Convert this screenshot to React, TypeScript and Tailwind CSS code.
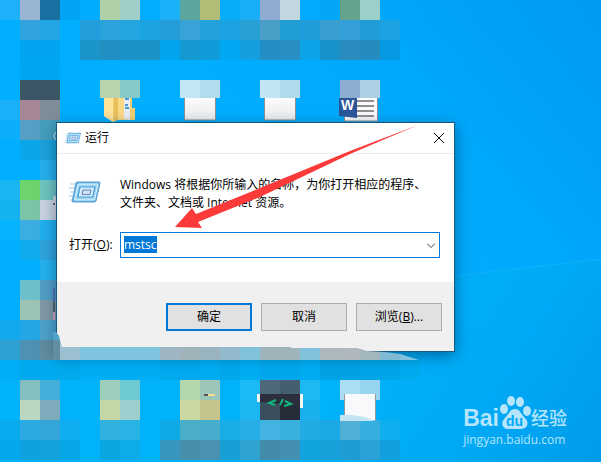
import { useEffect, useRef, useState } from 'react';

const TILE = 20;

// One entry per row of wallpaper tiles: [first column, colours]
const tileRows: { y: number; h?: number; runs: [number, string][] }[] = [
  { y: 0, runs: [[0, '1fb0fa 9ab4d4 1b6fa3 02a5f5 00acff b1cfa8 a0cec9 00adff 1bb0f8 5aa69e b1bc76 07adf8 19aef6 8eaccf c2d6df 00abff 03a7f5 64a48c 9bcfca']] },
  { y: 20, runs: [[1, '30a3dc 22a7e4'], [4, '239ddc 2ba2d9 22a5e0 1ca4e2 259ddb 38a3d6 239fd9 1aa2e2 289fd5 4a9fc9 219dd6 229ddb 399ed0 339ed7 219cd7 1ba2e3']] },
  { y: 40, runs: [[1, '01a4ef 01a4ef'], [4, '1c95cb 2090c3 1c93c8 1c92c6 03a4ee 1499d3 109bda 00a8f4 149fe0 238fc4 278fc2 0ca3e8 1992c9 2a8cbf 248cbf 0899e3']] },
  { y: 60, runs: [[1, '00a6f2 00a6f2']] },
  { y: 80, runs: [[1, '3b5664 3b5664']] },
  { y: 80, h: 18, runs: [[5, 'b8d4af 87cbc8'], [9, 'c3e6f5 b1dbee'], [13, 'c2e5f4 b0daed'], [17, '8caed3 add0e4']] },
  { y: 100, runs: [[0, '1ab0f9 a78797 7f8d99']] },
  { y: 120, runs: [[0, '0aaefb 559fc5 479fbd']] },
  { y: 140, runs: [[1, '0ba6e9 1ba3dc']] },
  { y: 160, runs: [[2, '27b0ec']] },
  { y: 180, runs: [[0, '19b5f2 6ed26d 70c6bf']] },
  { y: 200, runs: [[0, '12b3ef 7bc4a6 c9d4df']] },
  { y: 220, runs: [[0, '06b3ff 3bade1 21b0ee']] },
  { y: 240, runs: [[1, '10abed 30a4dc']] },
  { y: 260, runs: [[2, '25b2ee']] },
  { y: 280, runs: [[1, '6cbfcb 529fc7']] },
  { y: 300, runs: [[1, '9cc4b5 839ba7']] },
  { y: 320, runs: [[0, '13a8eb 22a6e5 4fa3cb']] },
  { y: 340, runs: [[0, '2ca0d1 4e92b3 608d9f']] },
  { y: 360, runs: [[0, '00adf7 00aaee 00aaee 00a9ed 00aef5 00aef5 00aef5 00aef5 00a9ee 00a9ee 00adf2 00a9ec 00aef4 00a9ec 00a9ec 00adf2 00a3e4 00a3e4 00a6e8 00a6e8 00abf0']] },
  { y: 380, runs: [[1, '83bfbe 43aed9'], [5, '9bcfbc 6fc9d3'], [9, 'b5d7ad 9bc6b8'], [12, '1bb9f5 4f6879 455e70 1cb9f4'], [17, 'acdef3 96d4ef']] },
  { y: 400, runs: [[1, 'bad7c2 7eabbc'], [5, 'c3d6a6 9dcfce'], [9, 'cad7a0 c3c58c'], [12, '1cb6f3 3b4e5d 252d38 1ab0ee']] },
  { y: 420, runs: [[0, '08aaee 2aaae0 34a5d8 10aef0'], [5, '30b1de 28b3e4'], [8, '10a9e8 4baec8 46adcc 18ade7 25afe5 43b3e2 3ab0df 1fabe3 1aa9e5 4fb0d7 36aee0 0dafef']] },
  { y: 440, runs: [[0, '04a9ed 0ea2de 12a3dd 07a7e8'], [5, '0aa6e1 0dabe8'], [8, '3996bf 458faa 4a92b1 18a0d6 30a3d1 438ca9 4490b1 11a4de 17a1db 1e9dd3 2aa2d8 11a0dd']] },
];

const edgeTiles = '9cc0d0 80c3df 80c3df 80c3df 80c3df 9db6c1 a0b3ba 9ab4bf 91bacc 80c1dc 9fb3bb 9fb3bb 80c1dc acb8be afb8bc a2b6be 80b9d4 80c1dc';

const Tiles = ({ y, h = TILE, col, colors }: { y: number; h?: number; col: number; colors: string }) => (
  <>
    {colors.split(' ').map((color, i) => (
      <rect key={i} x={(col + i) * TILE} y={y} width={TILE} height={h} fill={`#${color}`} />
    ))}
  </>
);

const Wallpaper = () => (
  <svg className="absolute inset-0 h-full w-full" shapeRendering="crispEdges" aria-hidden="true">
    <defs>
      <linearGradient id="sky" gradientUnits="userSpaceOnUse" x1="330" y1="260" x2="620" y2="20">
        <stop offset="0" stopColor="#00aeff" />
        <stop offset="0.5" stopColor="#00a8fb" />
        <stop offset="1" stopColor="#0099f3" />
      </linearGradient>
      <linearGradient id="floor" gradientUnits="userSpaceOnUse" x1="400" y1="300" x2="620" y2="440">
        <stop offset="0" stopColor="#00b2fa" />
        <stop offset="0.5" stopColor="#00a9f5" />
        <stop offset="1" stopColor="#009bea" />
      </linearGradient>
      <linearGradient id="paper" x1="0" y1="0" x2="0" y2="1">
        <stop offset="0" stopColor="#fbfbfc" />
        <stop offset="1" stopColor="#ececee" />
      </linearGradient>
    </defs>
    <rect width="100%" height="100%" fill="url(#sky)" />
    <path d="M0 329L455 276L601 259L4000 -140V4000H0Z" fill="url(#floor)" shapeRendering="auto" />
    <path d="M455 276L601 259" stroke="#12b0fc" shapeRendering="auto" />

    {tileRows.map((row) =>
      row.runs.map(([col, colors]) => <Tiles key={`${row.y}-${row.h}-${col}`} y={row.y} h={row.h} col={col} colors={colors} />)
    )}

    <g shapeRendering="auto">
      {/* folder */}
      <path d="M104 98h28v10h3v12h-5l-12 0-5 2-9-6z" fill="#f5cf70" />
      <path d="M104 98h9v24l-9-6z" fill="#ffe397" />
      <path d="M114 98h4v22l-4 1z" fill="#e9bf5b" />
      <path d="M118 98h6v21l-6 1z" fill="#fbd984" />
      <path d="M124 98h6v22l-6-1z" fill="#e7edf3" />
      <path d="M125 99h4M125 105h3M125 108h4" stroke="#4a9bd3" strokeWidth="2" />

      {/* blank documents */}
      <path d="M184.5 98v22h31V98" fill="url(#paper)" stroke="#8b8f92" />
      <path d="M264.500 98v22h31V98" fill="url(#paper)" stroke="#8b8f92" />
      <rect x="344" y="394" width="31" height="26" fill="#f8f9fb" />
      <path d="M344.500 394v21M375.500 394v27" stroke="#8b9aa3" />
      <path d="M340 415h12l13 2 10 4h-35z" fill="#c3e4f5" />

      {/* Word document */}
      <path d="M344.500 98v23h33V98" fill="#fafafa" stroke="#8b8f92" />
      <path d="M357 101h17M357 106h17M357 111h17M357 116h17" stroke="#909090" strokeWidth="2" />
      <path d="M339 98h18v20l-18-2z" fill="#2b579a" />
      <text x="341" y="110" fill="#fff" className="font-['Liberation_Sans'] text-[14px] font-bold">W</text>

      {/* script file */}
      <rect x="257" y="394" width="3" height="8" fill="#f4f6fa" />
      <rect x="300" y="394" width="3" height="14" fill="#f4f6fa" />
      <path d="M260 394h40v12l-40-4z" fill="#2b2e3c" />
      <path d="M276 400l-7 3 6 2M283 399l-3 6M285 401l6 3-7 2" fill="none" stroke="#12b57c" strokeWidth="2" />

      <rect x="204" y="394" width="4" height="2" fill="#5c5348" />
      <rect x="208" y="394" width="7" height="2" fill="#f4dc8e" />

      {/* slivers of icons behind the window */}
      <rect x="53" y="196" width="3" height="22" fill="#d9dadd" />
      <circle cx="54" cy="204" r="1" fill="#444" />
      <path d="M56 132q-4 4 0 8" fill="none" stroke="#d9edf5" />
      <rect x="53" y="288" width="2" height="14" fill="#4f74b4" />
      <rect x="53" y="302" width="2" height="10" fill="#53655f" />
      <rect x="53" y="312" width="2" height="8" fill="#dba7c3" />
    </g>
  </svg>
);

const RunIcon = ({ className }: { className: string }) => (
  <svg viewBox="0 0 32 24" className={className} aria-hidden="true">
    <path d="M1 4h7M0 8h7M2 12h5M0 16h5M1 20h4" stroke="#a5cdea" strokeWidth="1.2" />
    <path d="M8 2h22q1 0 1 1l-4 18q-.5 1-1.500 1H4q-1 0-.8-1L7 3q.3-1 1-1z" fill="#62b1e6" stroke="#5a9ed6" />
    <path d="M9 4h20l-3.500 16H5.500z" fill="#9fd8f6" stroke="#e3f5fd" />
    <path d="M11 7h15l-2.200 10H8.800z" fill="#d4effb" stroke="#4a9ad6" strokeWidth="1.200" />
    <path d="M14 10h8l-1 4.500h-8z" fill="#d8dff3" stroke="#5a86c4" />
  </svg>
);

const RunDialog = () => {
  const [command, setCommand] = useState('mstsc');
  const inputRef = useRef<HTMLInputElement>(null);

  useEffect(() => {
    inputRef.current?.focus();
    inputRef.current?.select();
  }, []);

  const buttonClass = 'h-7 w-[86px] border border-[#adadad] bg-[#e1e1e1] text-center';

  return (
    <section
      role="dialog"
      aria-labelledby="run-title"
      className="absolute left-14 top-[122px] w-[399px] border border-[#17597a] bg-white text-xs text-black shadow-[0_4px_14px_rgba(0,40,80,0.5)]"
    >
      <header className="flex h-[30px] items-center gap-1 pl-2 pr-[9px]">
        <RunIcon className="h-3 w-4" />
        <h1 id="run-title" className="flex-1">运行</h1>
        <button aria-label="关闭">
          <svg viewBox="0 0 12 12" className="size-3" fill="none" stroke="#000" aria-hidden="true">
            <path d="M1 1l10 10M11 1L1 11" />
          </svg>
        </button>
      </header>

      <div className="border-t border-[#ececec] pb-6 pl-3 pr-3.5 pt-[22px]">
        <div className="flex gap-[19px]">
          <RunIcon className="mt-1 h-6 w-8" />
          <p className="flex-1 leading-[18px]">
            Windows 将根据你所输入的名称，为你打开相应的程序、
            <br />
            文件夹、文档或 Internet 资源。
          </p>
        </div>
        <div className="mt-5 flex items-center">
          <label htmlFor="command" className="w-[51px]">
            打开(<u>O</u>):
          </label>
          <div className="flex h-[26px] flex-1 items-center border border-[#0078d7] pl-[3px] pr-1">
            <input
              id="command"
              ref={inputRef}
              value={command}
              onChange={(e) => setCommand(e.target.value)}
              className="h-5 min-w-0 flex-1 pb-0.5 outline-none selection:bg-[#0078d7] selection:text-white"
            />
            <button aria-label="展开">
              <svg viewBox="0 0 8 5" className="h-[5px] w-2" fill="none" stroke="#444" aria-hidden="true">
                <path d="M0 .5l4 4 4-4" />
              </svg>
            </button>
          </div>
        </div>
      </div>

      <footer className="flex justify-end gap-[9px] bg-[#f0f0f0] pb-5 pr-3 pt-[21px]">
        <button className="h-7 w-[86px] border-2 border-[#0078d7] bg-[#e1e1e1] text-center">确定</button>
        <button className={buttonClass}>取消</button>
        <button className={buttonClass}>
          浏览(<u>B</u>)...
        </button>
      </footer>
    </section>
  );
};

const Annotations = () => (
  <svg className="pointer-events-none absolute inset-0 h-full w-full" aria-hidden="true">
    <defs>
      <clipPath id="edge">
        <path d="M60 347H291V348H357L367 351L385 352L400 354L419 360H60Z" />
      </clipPath>
    </defs>
    {/* torn lower edge of the window */}
    <path d="M53 332h3l3 4 1 4h-7z" fill="#4fa3cb" />
    <path d="M53 340h7v20h-7z" fill="#608d9f" />
    <path d="M60 340l2 7h-2z" fill="#9cc0d0" />
    <g clipPath="url(#edge)" shapeRendering="crispEdges">
      <Tiles y={347} h={13} col={3} colors={edgeTiles} />
    </g>
    <path d="M418 125L350 151L260 188L196 214L192 208L175 227L202 228L198 222L260 197L350 154Z" fill="#fc3a3a" />
  </svg>
);

const Watermark = () => (
  <div className="absolute bottom-3 right-[34px] text-[#b4e5fd]">
    <div className="flex items-end">
      <span className="font-['Liberation_Sans'] text-[23px] font-bold leading-6">Bai</span>
      <svg viewBox="0 0 32 34" className="h-[34px] w-8" fill="currentColor" aria-hidden="true">
        <ellipse cx="5" cy="13" rx="4" ry="5" />
        <ellipse cx="12" cy="5" rx="4" ry="5" />
        <ellipse cx="21" cy="6" rx="4" ry="5" />
        <ellipse cx="28" cy="15" rx="4" ry="5" />
        <path d="M16 13c5 0 6 5 10 9 5 5 2 11-4 11H10c-7 0-9-6-4-11 4-4 5-9 10-9z" />
        <text x="7" y="30" fill="#00a9f5" className="font-['Liberation_Sans'] text-[14px] font-bold">du</text>
      </svg>
      <span className="text-lg font-medium leading-6">经验</span>
    </div>
    <p className="text-xs leading-5">jingyan.baidu.com</p>
  </div>
);

export default function App() {
  return (
    <main className="relative min-h-screen overflow-hidden bg-[#00acfd] font-['Open_Sans','Noto_Sans_CJK_SC',sans-serif]">
      <Wallpaper />
      <RunDialog />
      <Annotations />
      <Watermark />
    </main>
  );
}
